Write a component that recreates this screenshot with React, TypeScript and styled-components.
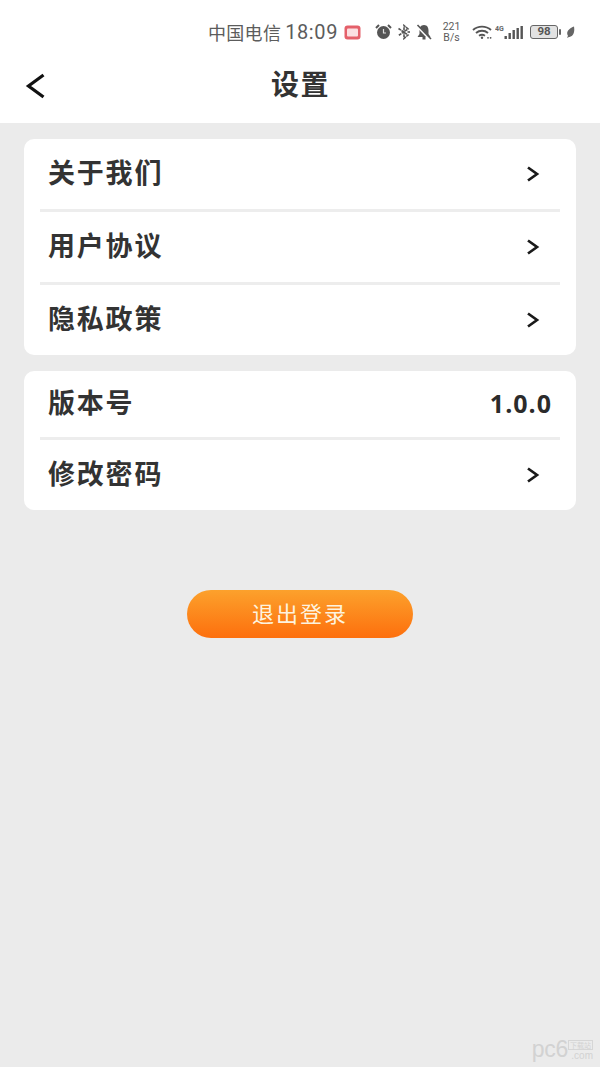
import styled, { createGlobalStyle } from 'styled-components'

const GlobalStyle = createGlobalStyle`
  html, body {
    margin: 0;
    padding: 0;
    background: #ebebeb;
  }
`

const Page = styled.div`
  width: 600px;
  height: 1067px;
  overflow: hidden;
  position: relative;
  background: #ebebeb;
  font-family: 'Noto Sans CJK SC', 'Noto Sans', sans-serif;
`
const Header = styled.header`
  height: 123px;
  background: #fff;
  box-sizing: border-box;
  display: flex;
  flex-direction: column;
`
const StatusBar = styled.div`
  height: 48px;
  padding: 16px 25px 0 0;
  box-sizing: border-box;
  display: flex;
  align-items: center;
  justify-content: flex-end;
  color: #555;
`
const Carrier = styled.span`
  font-size: 18px;
  line-height: 20px;
  letter-spacing: 0.3px;
  color: #5c5c5c;
  margin-right: 4px;
`
const Clock = styled.span`
  font-family: 'Roboto', sans-serif;
  font-size: 20px;
  line-height: 20px;
  letter-spacing: 0.6px;
  color: #5c5c5c;
  margin-right: 6px;
`
const StatusIcon = styled.svg<{ $gap?: number }>`
  display: block;
  flex: none;
  margin-right: ${(p) => p.$gap ?? 0}px;
`
const Speed = styled.span`
  font-family: 'Roboto', sans-serif;
  font-size: 10.5px;
  line-height: 11px;
  width: 21px;
  text-align: center;
  color: #5c5c5c;
  margin-right: 10px;
`
const Battery = styled.span`
  width: 28px;
  height: 14px;
  box-sizing: border-box;
  border: 1.5px solid #666;
  border-radius: 3px;
  font-family: 'Roboto', sans-serif;
  font-size: 11.5px;
  font-weight: 700;
  line-height: 11px;
  text-align: center;
  color: #555;
  background: #e2e2e2;
  margin-right: 1px;
`
const TitleBar = styled.div`
  flex: 1;
  position: relative;
  display: flex;
  align-items: center;
  justify-content: center;
  padding-bottom: 5px;
`
const BackButton = styled.svg`
  position: absolute;
  left: 25px;
  top: 24px;
`
const Title = styled.h1`
  margin: 0;
  font-size: 28px;
  line-height: 32px;
  font-weight: 700;
  letter-spacing: 1.4px;
  margin-right: -1px;
  color: #333;
`
const Content = styled.main`
  padding: 16px 24px 0;
  display: flex;
  flex-direction: column;
  gap: 16px;
`
const Card = styled.section`
  background: #fff;
  border-radius: 10px;
  padding: 0 16px;
`
const Row = styled.div<{ $height: number; $divider?: boolean }>`
  height: ${(p) => p.$height}px;
  box-sizing: border-box;
  padding: 0 20px 3px 9px;
  display: flex;
  align-items: center;
  justify-content: space-between;
  border-bottom: ${(p) => (p.$divider ? '3px solid #ededed' : 'none')};
`
const Label = styled.span`
  font-size: 27px;
  line-height: 32px;
  font-weight: 700;
  color: #333;
  letter-spacing: 1.8px;
  margin-top: -2px;
  margin-left: -1px;
`
const Value = styled.span`
  font-family: 'Open Sans', sans-serif;
  font-size: 25px;
  line-height: 32px;
  font-weight: 700;
  letter-spacing: 1px;
  color: #2b2b2b;
  margin-right: -12px;
`
const Chevron = styled.svg`
  display: block;
  margin-top: 2px;
`
const LogoutWrap = styled.div`
  display: flex;
  justify-content: center;
  margin-top: 80px;
`
const LogoutButton = styled.button`
  width: 226px;
  height: 48px;
  border: none;
  border-radius: 24px;
  background: linear-gradient(180deg, #fca12c 0%, #fd6f0d 100%);
  color: #fdf3df;
  font-family: inherit;
  font-size: 22px;
  font-weight: 400;
  line-height: 30px;
  letter-spacing: 2px;
  padding: 0 0 5px;
`
const Watermark = styled.div`
  position: absolute;
  right: 7px;
  bottom: 6px;
  display: flex;
  align-items: flex-end;
  color: #d2d2d2;
  font-family: 'Liberation Sans', sans-serif;
`
const WatermarkBrand = styled.span`
  font-size: 23px;
  line-height: 24px;
  letter-spacing: -0.3px;
`
const WatermarkSide = styled.span`
  display: flex;
  flex-direction: column;
  align-items: flex-end;
`
const WatermarkTag = styled.span`
  font-family: 'Noto Sans CJK SC', sans-serif;
  font-size: 7px;
  line-height: 8px;
  border: 1px solid #d6d6d6;
  padding: 0 1px;
`
const WatermarkDomain = styled.span`
  font-size: 10px;
  line-height: 11px;
`

const ArrowRight = () => (
  <Chevron width="14" height="18" viewBox="0 0 14 18" fill="none">
    <path d="M2 2.5 L11 9 L2 15.5" stroke="#1a1a1a" strokeWidth="2.7" />
  </Chevron>
)

const App = () => {
  return (
    <Page>
      <GlobalStyle />
      <Header>
        <StatusBar>
          <Carrier>中国电信</Carrier>
          <Clock>18:09</Clock>
          <StatusIcon $gap={14} width="17" height="15" viewBox="0 0 17 15">
            <rect x="0.5" y="0.5" width="16" height="14" rx="3" fill="#e4606a" />
            <rect x="3" y="3.5" width="11" height="8" rx="1" fill="#fbdfe1" />
          </StatusIcon>
          <StatusIcon $gap={5} width="17" height="16" viewBox="0 0 17 16">
            <circle cx="8.5" cy="8.5" r="6.5" fill="#555" />
            <path d="M1 4 L4 1 M16 4 L13 1" stroke="#555" strokeWidth="2" />
            <path d="M8.5 5 V9 H11" stroke="#ddd" strokeWidth="1.2" fill="none" />
          </StatusIcon>
          <StatusIcon $gap={5} width="14" height="16" viewBox="0 0 14 16" fill="none">
            <path d="M1.5 4.5 L11 11 L7 14.5 V1.5 L11 5 L1.5 11.5" stroke="#555" strokeWidth="1.6" strokeDasharray="3 0.6" />
            <path d="M10.5 8 H13" stroke="#555" strokeWidth="1.6" />
          </StatusIcon>
          <StatusIcon $gap={9} width="16" height="16" viewBox="0 0 16 16">
            <path d="M8 1 C4.5 1 3.5 4 3.5 6.5 V10 L1.5 13 H14.5 L12.5 10 V6.5 C12.5 4 11.5 1 8 1 Z" fill="#555" />
            <rect x="6.5" y="13" width="3" height="2.5" fill="#555" />
            <path d="M1.5 2.5 L13.5 15" stroke="#fff" strokeWidth="2.4" />
            <path d="M1.5 1 L15 15" stroke="#555" strokeWidth="1.6" />
          </StatusIcon>
          <Speed>
            221
            <br />
            B/s
          </Speed>
          <StatusIcon $gap={3} width="20" height="14" viewBox="0 0 20 14" fill="none">
            <path d="M1 5 C6 0.5 14 0.5 19 5" stroke="#555" strokeWidth="1.9" />
            <path d="M4 8 C7.5 5 12.5 5 16 8" stroke="#555" strokeWidth="1.9" />
            <path d="M7 10.8 C9 9.4 11 9.4 13 10.8" stroke="#555" strokeWidth="1.8" />
            <circle cx="10" cy="12.8" r="1.2" fill="#555" />
            <circle cx="16" cy="12.8" r="0.9" fill="#555" />
            <circle cx="18.6" cy="12.8" r="0.9" fill="#555" />
          </StatusIcon>
          <StatusIcon $gap={7} width="28" height="15" viewBox="0 0 28 15">
            <text x="0" y="6" fontSize="7" fontWeight="700" fontFamily="Roboto, sans-serif" fill="#666">4G</text>
            <rect x="9.5" y="11" width="2.4" height="3" fill="#555" />
            <rect x="13.5" y="8" width="2.4" height="6" fill="#555" />
            <rect x="17.5" y="5" width="2.4" height="9" fill="#555" />
            <rect x="21.5" y="3" width="2.4" height="11" fill="#555" />
            <rect x="25.5" y="1" width="2.4" height="13" fill="#555" />
          </StatusIcon>
          <Battery>98</Battery>
          <StatusIcon $gap={5} width="2" height="6" viewBox="0 0 2 6">
            <rect width="2" height="6" rx="1" fill="#666" />
          </StatusIcon>
          <StatusIcon width="9" height="12" viewBox="0 0 9 12">
            <path d="M8 0.5 C8.8 5 8 10 3.5 11 C3 11 2 11.5 1.5 11.8 L1 11.3 C1.5 10.8 2 10.4 2 10 C-0.5 6 3 2.5 8 0.5 Z" fill="#666" />
          </StatusIcon>
        </StatusBar>
        <TitleBar>
          <BackButton width="22" height="28" viewBox="0 0 22 28" fill="none">
            <path d="M18.5 3 L3.5 14 L18.5 25" stroke="#111" strokeWidth="3.2" />
          </BackButton>
          <Title>设置</Title>
        </TitleBar>
      </Header>
      <Content>
        <Card>
          <Row $height={73} $divider>
            <Label>关于我们</Label>
            <ArrowRight />
          </Row>
          <Row $height={73} $divider>
            <Label>用户协议</Label>
            <ArrowRight />
          </Row>
          <Row $height={70}>
            <Label>隐私政策</Label>
            <ArrowRight />
          </Row>
        </Card>
        <Card>
          <Row $height={69} $divider>
            <Label>版本号</Label>
            <Value>1.0.0</Value>
          </Row>
          <Row $height={70}>
            <Label>修改密码</Label>
            <ArrowRight />
          </Row>
        </Card>
      </Content>
      <LogoutWrap>
        <LogoutButton>退出登录</LogoutButton>
      </LogoutWrap>
      <Watermark>
        <WatermarkBrand>pc6</WatermarkBrand>
        <WatermarkSide>
          <WatermarkTag>下载站</WatermarkTag>
          <WatermarkDomain>.com</WatermarkDomain>
        </WatermarkSide>
      </Watermark>
    </Page>
  )
}

export default App
